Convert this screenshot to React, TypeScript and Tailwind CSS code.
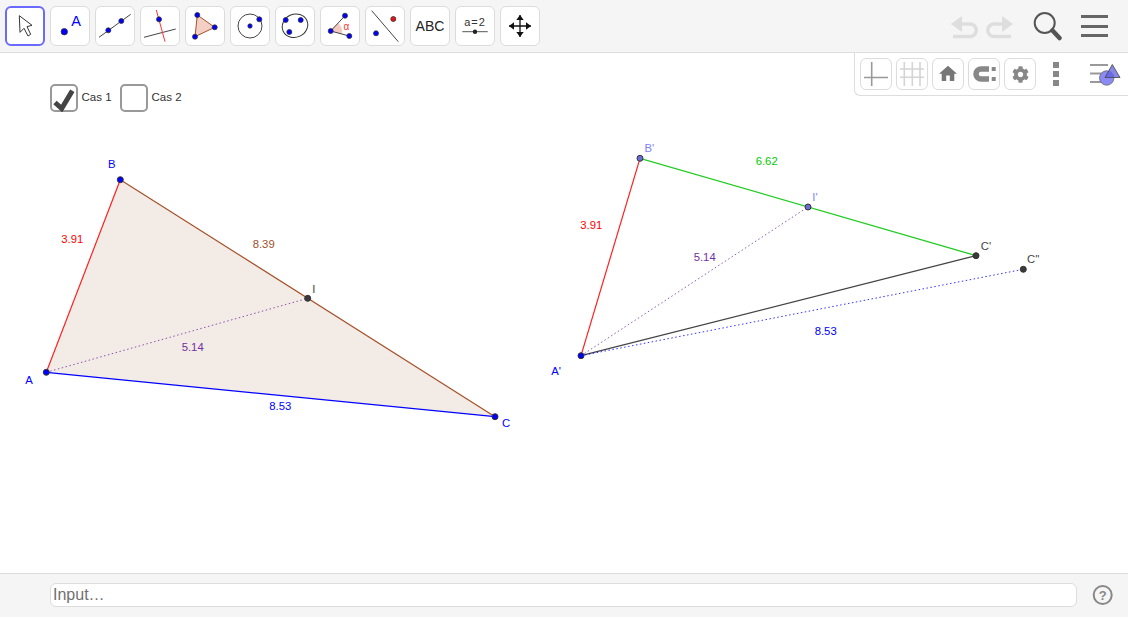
import React from "react";
import { FaCog } from "react-icons/fa";

const BLUE = "#0000ff";

function Dot({ x, y, r = 2.5, fill = BLUE }: { x: number; y: number; r?: number; fill?: string }) {
  return <circle cx={x} cy={y} r={r} fill={fill} stroke="#333" strokeWidth={0.8} />;
}

function Point({ x, y, fill = BLUE }: { x: number; y: number; fill?: string }) {
  return <circle cx={x} cy={y} r={3} fill={fill} stroke="#333" strokeWidth={1} />;
}

function Tool({ active, children }: { active?: boolean; children: React.ReactNode }) {
  return (
    <button
      className={
        active
          ? "w-10 h-10 shrink-0 bg-white rounded-md border-2 border-[#6a6aff] box-border p-0 relative overflow-hidden"
          : "w-10 h-10 shrink-0 bg-white rounded-md border border-[#dcdcdc] box-border p-0 relative overflow-hidden"
      }
    >
      <svg
        viewBox="0 0 40 40"
        className={active ? "w-10 h-10 absolute -left-[2px] -top-[2px]" : "w-10 h-10 absolute -left-px -top-px"}
      >
        {children}
      </svg>
    </button>
  );
}

function Small({ children }: { children: React.ReactNode }) {
  return (
    <button className="w-8 h-8 shrink-0 bg-white rounded-md border border-[#dcdcdc] box-border p-0 relative overflow-hidden">
      <svg viewBox="0 0 32 32" className="w-8 h-8 absolute -left-px -top-px">
        {children}
      </svg>
    </button>
  );
}

function Label({ x, y, color, size = 11.3, spacing, children }: { x: number; y: number; color: string; size?: number; spacing?: number; children: React.ReactNode }) {
  return (
    <text x={x} y={y} fill={color} fontSize={size} letterSpacing={spacing} textAnchor="middle" dominantBaseline="central" fontFamily="'Liberation Sans', sans-serif">
      {children}
    </text>
  );
}

function Tick({ checked, label }: { checked?: boolean; label: string }) {
  return (
    <label className="flex items-center">
      <span className="w-7 h-7 box-border border-2 border-[#999999] rounded-[5px] bg-white relative shrink-0">
        {checked && (
          <svg viewBox="0 0 28 28" className="w-7 h-7 absolute -left-[2px] -top-[2px]">
            <polyline points="5,18.5 11.7,24.5 22.3,6.7" fill="none" stroke="#444444" strokeWidth={5} />
          </svg>
        )}
      </span>
      <span className="ml-[3.5px] text-[11.5px] text-[#333333] leading-none w-[38.5px]">{label}</span>
    </label>
  );
}

export default function App() {
  return (
    <div className="w-[1128px] h-[617px] flex flex-col bg-white overflow-hidden [font-family:'Liberation_Sans',sans-serif]">
      <header className="h-[53px] box-border shrink-0 flex items-center bg-[#f5f5f5] border-b border-[#dddddd] pl-[5px]">
        <div className="flex gap-[5px]">
          <Tool active>
            <polygon points="14.3,9.7 15,26.3 19,22.3 23,30 25.7,28.3 22,20.7 27,19.3" fill="#fff" stroke="#333" strokeWidth={1} />
          </Tool>
          <Tool>
            <Dot x={14.3} y={25.7} r={3.2} />
            <Label x={26} y={14.7} color={BLUE} size={14.5}>A</Label>
          </Tool>
          <Tool>
            <line x1={4} y1={31.3} x2={35.7} y2={8.3} stroke="#444" />
            <Dot x={13.3} y={24.3} />
            <Dot x={26.3} y={15} />
          </Tool>
          <Tool>
            <line x1={4} y1={31.3} x2={35.7} y2={23} stroke="#444" />
            <line x1={16.3} y1={4} x2={25} y2={35.7} stroke="#f33" />
            <Dot x={19} y={13.3} />
          </Tool>
          <Tool>
            <polygon points="12.3,9 29.7,21.3 10,30.7" fill="#f3cfc4" stroke="#a5512a" strokeWidth={1} />
            <Dot x={12.3} y={9} />
            <Dot x={29.7} y={21.3} />
            <Dot x={10} y={30.7} />
          </Tool>
          <Tool>
            <circle cx={20} cy={20} r={12} fill="none" stroke="#444" />
            <Dot x={20} y={20} r={2.2} />
            <Dot x={29.3} y={13.3} />
          </Tool>
          <Tool>
            <ellipse cx={20} cy={19.7} rx={13} ry={11.5} transform="rotate(-25 20 19.7)" fill="none" stroke="#333" />
            <Dot x={10.7} y={14} />
            <Dot x={25.7} y={14} />
            <Dot x={14.3} y={26} />
          </Tool>
          <Tool>
            <path d="M10.7 25 L18 17 A11 11 0 0 1 21.7 27.9 Z" fill="#f6c9c0" />
            <line x1={10.7} y1={25} x2={25} y2={9.7} stroke="#444" />
            <line x1={10.7} y1={25} x2={29.3} y2={30} stroke="#444" />
            <Dot x={10.7} y={25} />
            <Dot x={25} y={9.7} />
            <Dot x={29.3} y={30} />
            <Label x={26.3} y={20.7} color="#f33" size={10}>α</Label>
          </Tool>
          <Tool>
            <line x1={6.7} y1={4.7} x2={33.3} y2={35.7} stroke="#444" />
            <Dot x={11} y={27.3} />
            <Dot x={28.3} y={13} fill="#f01010" />
          </Tool>
          <Tool>
            <Label x={20} y={20} color="#222" size={14}>ABC</Label>
          </Tool>
          <Tool>
            <Label x={20} y={15.7} color="#333" size={11} spacing={1}>a=2</Label>
            <line x1={7.3} y1={25.7} x2={32.7} y2={25.7} stroke="#555" />
            <circle cx={20} cy={25.7} r={2.2} fill="#222" />
          </Tool>
          <Tool>
            <path d="M20 9 V31 M9 20 H31" stroke="#111" strokeWidth={1.3} />
            <polygon points="20,9 16.3,14 23.7,14" fill="#111" />
            <polygon points="20,31 16.3,26 23.7,26" fill="#111" />
            <polygon points="9,20 14,16.3 14,23.7" fill="#111" />
            <polygon points="31,20 26,16.3 26,23.7" fill="#111" />
          </Tool>
        </div>
        <div className="ml-auto flex items-center pr-5">
          <svg viewBox="0 0 28 26" className="w-7 h-[26px]">
            <path d="M8 11 H20 A6.25 6.25 0 0 1 20 23.5 H3" fill="none" stroke="#dedede" strokeWidth={3.5} />
            <polygon points="1,11 12,3 12,19" fill="#dedede" />
          </svg>
          <svg viewBox="0 0 28 26" className="w-7 h-[26px] ml-2">
            <path d="M20 11 H8 A6.25 6.25 0 0 0 8 23.5 H25" fill="none" stroke="#dedede" strokeWidth={3.5} />
            <polygon points="27,11 16,3 16,19" fill="#dedede" />
          </svg>
          <svg viewBox="0 0 30 30" className="w-[30px] h-[30px] ml-[18px]">
            <circle cx={12.7} cy={12} r={10} fill="none" stroke="#555" strokeWidth={2} />
            <line x1={20.5} y1={19.5} x2={27.5} y2={27} stroke="#555" strokeWidth={4.5} strokeLinecap="round" />
          </svg>
          <div className="ml-[19px] w-[27px] flex flex-col gap-[6.5px]">
            <div className="h-[3px] bg-[#666666]" />
            <div className="h-[3px] bg-[#666666]" />
            <div className="h-[3px] bg-[#666666]" />
          </div>
        </div>
      </header>

      <main className="relative flex-1 min-h-0">
        <svg viewBox="0 53 1128 520" className="absolute inset-0 w-full h-full">
          <polygon points="46.3,372.3 120.3,179.7 495,416.7" fill="#f3ebe6" />
          <line x1={46.3} y1={372.3} x2={120.3} y2={179.7} stroke="#ff2020" strokeWidth={1.2} />
          <line x1={120.3} y1={179.7} x2={495} y2={416.7} stroke="#a5512a" strokeWidth={1.2} />
          <line x1={46.3} y1={372.3} x2={495} y2={416.7} stroke={BLUE} strokeWidth={1.2} />
          <line x1={46.3} y1={372.3} x2={307.7} y2={298.3} stroke="#7030a0" strokeOpacity={0.8} strokeDasharray="1.5 2.5" />
          <Point x={46.3} y={372.3} />
          <Point x={120.3} y={179.7} />
          <Point x={495} y={416.7} />
          <Point x={307.7} y={298.3} fill="#3a3a3a" />
          <Label x={29} y={380} color={BLUE}>A</Label>
          <Label x={111.7} y={164} color={BLUE}>B</Label>
          <Label x={506} y={423.3} color={BLUE}>C</Label>
          <Label x={313.7} y={289} color="#444">I</Label>
          <Label x={72.3} y={239} color="#ff0000">3.91</Label>
          <Label x={263.7} y={244} color="#a0522d">8.39</Label>
          <Label x={192.7} y={347} color="#7030a0">5.14</Label>
          <Label x={280.3} y={406} color={BLUE}>8.53</Label>

          <line x1={581} y1={355.7} x2={640} y2={158.3} stroke="#ff2020" strokeWidth={1.2} />
          <line x1={640} y1={158.3} x2={976} y2={255.7} stroke="#22cc22" strokeWidth={1.2} />
          <line x1={581} y1={355.7} x2={976} y2={255.7} stroke="#444" strokeWidth={1.2} />
          <line x1={581} y1={355.7} x2={1023.3} y2={269.3} stroke={BLUE} strokeOpacity={0.8} strokeDasharray="1.5 2.5" />
          <line x1={581} y1={355.7} x2={808} y2={207} stroke="#7030a0" strokeOpacity={0.8} strokeDasharray="1.5 2.5" />
          <Point x={581} y={355.7} />
          <Point x={640} y={158.3} fill="#6b6bd6" />
          <Point x={808} y={207} fill="#6b6bd6" />
          <Point x={976} y={255.7} fill="#3a3a3a" />
          <Point x={1023.3} y={269.3} fill="#3a3a3a" />
          <Label x={556} y={371} color={BLUE}>A'</Label>
          <Label x={649.3} y={148.3} color="#8080ff">B'</Label>
          <Label x={815} y={196.7} color="#8080ff">I'</Label>
          <Label x={986} y={245.7} color="#444">C'</Label>
          <Label x={1033.3} y={259} color="#444">C''</Label>
          <Label x={766.7} y={161} color="#00cc00">6.62</Label>
          <Label x={591.3} y={225} color="#ff0000">3.91</Label>
          <Label x={704.7} y={257} color="#7030a0">5.14</Label>
          <Label x={825.7} y={331} color={BLUE}>8.53</Label>
        </svg>

        <div className="relative flex pl-[50px] pt-[31px]">
          <Tick checked label="Cas 1" />
          <Tick label="Cas 2" />
        </div>

        <div className="absolute top-0 right-0 w-[274px] h-[43px] box-border bg-white border-l border-b border-[#dddddd] rounded-bl-md flex items-start pl-[5px] pt-[5px]">
          <div className="flex gap-1">
            <Small>
              <path d="M4 19.5 H28 M11.7 4 V28" stroke="#999" strokeWidth={1.6} fill="none" />
            </Small>
            <Small>
              <path d="M4 11 H28 M4 19.3 H28 M8.3 4 V28 M16.3 4 V28 M24 4 V28" stroke="#d4d4d4" strokeWidth={1.6} fill="none" />
            </Small>
            <Small>
              <path d="M10 20v-6h4v6h5v-8h3L12 3 2 12h3v8z" fill="#777" transform="translate(5.2 5) scale(0.9)" />
            </Small>
            <Small>
              <path d="M21 11 H13 A5 5 0 0 0 13 21 H21" fill="none" stroke="#888" strokeWidth={5.5} />
              <rect x={23.7} y={9} width={4} height={4} fill="#888" />
              <rect x={23.7} y={19} width={4} height={4} fill="#888" />
            </Small>
            <Small>
              <foreignObject x={7.5} y={7.5} width={17} height={17}>
                <FaCog className="w-[17px] h-[17px] text-[#888888]" />
              </foreignObject>
            </Small>
          </div>
          <div className="ml-[17px] mt-1 flex flex-col gap-[3px]">
            <div className="w-1.5 h-1.5 bg-[#888888]" />
            <div className="w-1.5 h-1.5 bg-[#888888]" />
            <div className="w-1.5 h-1.5 bg-[#888888]" />
          </div>
          <svg viewBox="0 0 34 26" className="w-[34px] h-[26px] ml-[29px] mt-[5px]">
            <path d="M2 2 H20 M2 10.5 H16 M2 19 H14" stroke="#999" strokeWidth={2} />
            <circle cx={18.7} cy={15} r={7.2} fill="#8a8af5" stroke="#666" strokeWidth={0.8} />
            <polygon points="24.3,1.5 32,14.5 17,14.5" fill="#5f5fe0" fillOpacity={0.75} stroke="#444" strokeWidth={0.8} />
          </svg>
        </div>
      </main>

      <footer className="h-[44px] box-border shrink-0 flex items-start bg-[#f5f5f5] border-t border-[#dddddd] pl-[50px] pt-[9px]">
        <input
          placeholder="Input…"
          className="w-[1027px] h-6 box-border bg-white border border-[#dddddd] rounded-md pl-[2px] text-base text-[#666666] placeholder:text-[#707070] outline-none"
        />
        <svg viewBox="0 0 22 22" className="w-[22px] h-[22px] ml-[14px] mt-px">
          <circle cx={11.7} cy={11} r={9} fill="none" stroke="#888" strokeWidth={2} />
          <text x={11.7} y={15.7} textAnchor="middle" fontSize={13} fontWeight="bold" fill="#888" fontFamily="'Liberation Sans', sans-serif">?</text>
        </svg>
      </footer>
    </div>
  );
}
